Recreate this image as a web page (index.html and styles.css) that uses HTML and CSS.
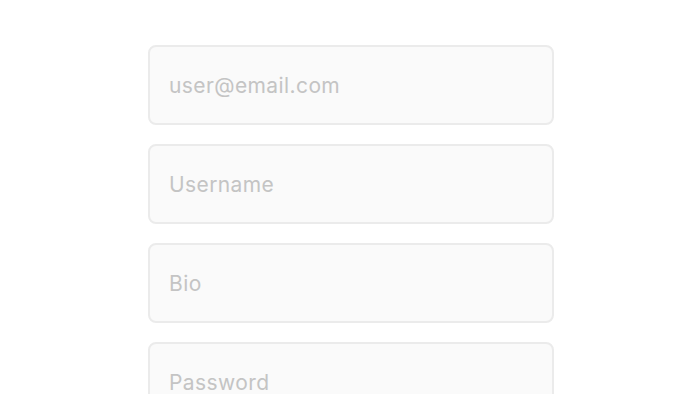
FILE: index.html
```html
<!DOCTYPE html>
<html>
<head>
<meta charset="utf-8">
<link rel="stylesheet" href="styles.css">
</head>
<body>
<form class="form">
  <input class="field" type="email" placeholder="user@email.com">
  <input class="field" type="text" placeholder="Username">
  <input class="field" type="text" placeholder="Bio">
  <input class="field" type="password" placeholder="Password">
</form>
</body>
</html>
```

FILE: styles.css
```css
html, body {
  margin: 0;
  padding: 0;
  background: #ffffff;
  overflow: hidden;
  height: 394px;
}
.form {
  display: flex;
  flex-direction: column;
  gap: 19px;
  width: 406px;
  margin: 45px 0 0 148px;
}
.field {
  box-sizing: border-box;
  flex: none;
  height: 80px;
  width: 100%;
  margin: 0;
  padding: 0 19px;
  border: 2px solid #ebebeb;
  border-radius: 8px;
  background: #fafafa;
  font-family: Inter, "Liberation Sans", sans-serif;
  font-size: 21px;
  letter-spacing: 0.4px;
  color: #333;
  outline: none;
}
.field::placeholder {
  color: #c4c4c4;
  opacity: 1;
}
```
